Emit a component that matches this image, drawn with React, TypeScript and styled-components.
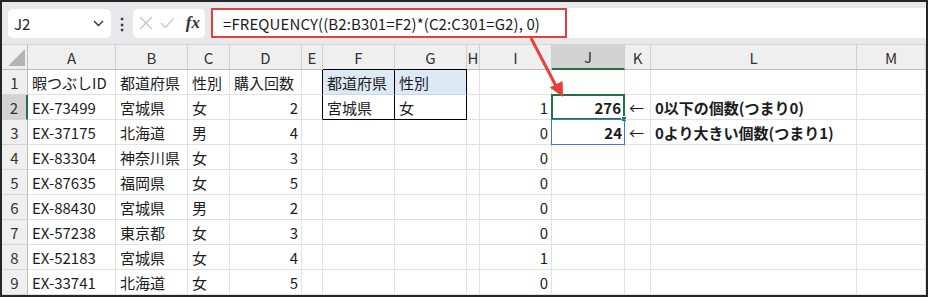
import React from "react";
import styled, { createGlobalStyle, css } from "styled-components";

const GlobalStyle = createGlobalStyle`
  html, body {
    margin: 0;
    padding: 0;
    background: #ffffff;
  }
  * {
    box-sizing: border-box;
  }
`;

const FONT = `"Noto Sans CJK JP", "Noto Sans", sans-serif`;

// column widths, row header first
const COLS = [26, 88, 72, 42, 72, 21, 72, 72, 13, 72, 73, 26, 206, 69];
const LETTERS = ["A", "B", "C", "D", "E", "F", "G", "H", "I", "J", "K", "L", "M"];

const Frame = styled.div`
  position: relative;
  width: 928px;
  height: 297px;
  border: 2px solid #262626;
  overflow: hidden;
  display: flex;
  flex-direction: column;
  font-family: ${FONT};
  color: #1c1c1c;
`;

const FormulaBar = styled.div`
  height: 43px;
  flex: none;
  display: flex;
  align-items: center;
  padding: 0 0 0 6px;
  background: #e8e8eb;
  border-bottom: 1px solid #d6d6d9;
`;

const NameBox = styled.div`
  width: 103px;
  height: 29px;
  background: #fff;
  border-radius: 5px;
  display: flex;
  align-items: center;
  justify-content: space-between;
  padding: 0 7px 0 6px;
  font-size: 15px;
  color: #222;
`;

const Dots = styled.div`
  width: 22px;
  display: flex;
  justify-content: center;
  font-size: 16px;
  color: #333;
  font-weight: bold;
`;

const ActionBox = styled.div`
  width: 72px;
  height: 29px;
  background: #fff;
  border-radius: 5px;
  display: flex;
  align-items: center;
  padding: 0 5px 0 6px;
  gap: 7px;
`;

const Fx = styled.span`
  font-family: "Liberation Serif", serif;
  font-style: italic;
  font-weight: bold;
  font-size: 17px;
  color: #333;
  margin-left: 4px;
`;

const FormulaField = styled.div`
  flex: 1;
  height: 30px;
  margin-left: 6px;
  background: #fff;
  display: flex;
  align-items: center;
`;

const FormulaText = styled.div`
  width: 356px;
  height: 30px;
  border: 2px solid #e2403d;
  display: flex;
  align-items: center;
  padding-left: 10px;
  font-size: 15px;
  letter-spacing: 0.1px;
  color: #1c1c1c;
  white-space: nowrap;
`;

const Sheet = styled.div`
  display: grid;
  grid-template-columns: ${COLS.map((c) => c + "px").join(" ")};
  grid-auto-rows: 25px;
`;

const ColHead = styled.div<{ $active?: boolean }>`
  background: ${(p) => (p.$active ? "#d3d3d3" : "#efefef")};
  border-right: 1px solid #d0d0d0;
  border-bottom: ${(p) => (p.$active ? "2px solid #217346" : "1px solid #bdbdbd")};
  display: flex;
  align-items: center;
  justify-content: center;
  font-size: 15px;
  color: #333;
`;

const Corner = styled.div`
  background: #efefef;
  border-right: 1px solid #bdbdbd;
  border-bottom: 1px solid #bdbdbd;
  display: flex;
  align-items: flex-end;
  justify-content: flex-end;
  padding: 0 2px 3px 0;
`;

const RowHead = styled.div<{ $active?: boolean }>`
  background: ${(p) => (p.$active ? "#d3d3d3" : "#efefef")};
  border-right: ${(p) => (p.$active ? "2px solid #217346" : "1px solid #bdbdbd")};
  border-bottom: 1px solid #d6d6d6;
  display: flex;
  align-items: center;
  justify-content: center;
  font-size: 15px;
  color: #333;
`;

type CellKind = "tableHead" | "tableBody" | "beforeTable" | "selected" | "range";

const Cell = styled.div<{ $num?: boolean; $bold?: boolean; $kind?: CellKind }>`
  position: relative;
  border-right: 1px solid #e1e1e1;
  border-bottom: 1px solid #e1e1e1;
  display: flex;
  align-items: center;
  justify-content: ${(p) => (p.$num ? "flex-end" : "flex-start")};
  padding: 0 3px 0 4px;
  font-size: 15px;
  font-weight: ${(p) => (p.$bold ? 700 : 400)};
  white-space: nowrap;

  ${(p) =>
    p.$kind === "beforeTable" &&
    css`
      border-right: 1px solid #000;
    `}
  ${(p) =>
    p.$kind === "tableHead" &&
    css`
      background: #dde9f5;
      border-right: 1px solid #000;
      border-top: 1px solid #000;
      margin-top: -1px;
      border-bottom: 1px solid #c9d6e3;
    `}
  ${(p) =>
    p.$kind === "tableBody" &&
    css`
      border-right: 1px solid #000;
      border-bottom: 1px solid #000;
    `}
  ${(p) =>
    p.$kind === "selected" &&
    css`
      border: 2px solid #217346;
      margin: -1px 0 0 -1px;
      padding-right: 2px;
    `}
  ${(p) =>
    p.$kind === "range" &&
    css`
      border: 1px solid #3b78d8;
      margin: -1px 0 0 -1px;
      padding-right: 2px;
    `}
`;

const Handle = styled.span`
  position: absolute;
  right: -4px;
  bottom: -4px;
  width: 6px;
  height: 6px;
  background: #217346;
  border: 1px solid #fff;
`;

const Overlay = styled.svg`
  position: absolute;
  top: -2px;
  left: -2px;
  pointer-events: none;
`;

type Row = {
  a?: string;
  b?: string;
  c?: string;
  d?: string;
  f?: string;
  g?: string;
  i?: string;
  j?: string;
  k?: string;
  l?: string;
};

const rows: Row[] = [
  { a: "暇つぶしID", b: "都道府県", c: "性別", d: "購入回数", f: "都道府県", g: "性別" },
  { a: "EX-73499", b: "宮城県", c: "女", d: "2", f: "宮城県", g: "女", i: "1", j: "276", k: "←", l: "0以下の個数(つまり0)" },
  { a: "EX-37175", b: "北海道", c: "男", d: "4", i: "0", j: "24", k: "←", l: "0より大きい個数(つまり1)" },
  { a: "EX-83304", b: "神奈川県", c: "女", d: "3", i: "0" },
  { a: "EX-87635", b: "福岡県", c: "女", d: "5", i: "0" },
  { a: "EX-88430", b: "宮城県", c: "男", d: "2", i: "0" },
  { a: "EX-57238", b: "東京都", c: "女", d: "3", i: "0" },
  { a: "EX-52183", b: "宮城県", c: "女", d: "4", i: "1" },
  { a: "EX-33741", b: "北海道", c: "女", d: "5", i: "0" },
];

function Chevron() {
  return (
    <svg width="11" height="7" viewBox="0 0 11 7">
      <path d="M1 1l4.5 4.5L10 1" fill="none" stroke="#333" strokeWidth="1.4" />
    </svg>
  );
}

function CrossIcon() {
  return (
    <svg width="14" height="14" viewBox="0 0 14 14">
      <path d="M1 1l12 12M13 1L1 13" stroke="#c4c4c4" strokeWidth="1.2" fill="none" />
    </svg>
  );
}

function CheckIcon() {
  return (
    <svg width="15" height="12" viewBox="0 0 15 12">
      <path d="M1 6l4.5 4.5L14 1" stroke="#c4c4c4" strokeWidth="1.2" fill="none" />
    </svg>
  );
}

function App() {
  return (
    <>
      <GlobalStyle />
      <Frame>
        <FormulaBar>
          <NameBox>
            <span>J2</span>
            <Chevron />
          </NameBox>
          <Dots>⋮</Dots>
          <ActionBox>
            <CrossIcon />
            <CheckIcon />
            <Fx>fx</Fx>
          </ActionBox>
          <FormulaField>
            <FormulaText>=FREQUENCY((B2:B301=F2)*(C2:C301=G2), 0)</FormulaText>
          </FormulaField>
        </FormulaBar>

        <Sheet>
          <Corner>
            <svg width="17" height="17" viewBox="0 0 17 17">
              <path d="M17 0V17H0Z" fill="#b4b4b4" />
            </svg>
          </Corner>
          {LETTERS.map((l) => (
            <ColHead key={l} $active={l === "J"}>
              {l}
            </ColHead>
          ))}

          {rows.map((r, idx) => {
            const n = idx + 1;
            const isHead = n === 1;
            const inTable = n <= 2;
            const fKind: CellKind | undefined = inTable ? (isHead ? "tableHead" : "tableBody") : undefined;
            return (
              <React.Fragment key={n}>
                <RowHead $active={n === 2}>{n}</RowHead>
                <Cell>{r.a}</Cell>
                <Cell>{r.b}</Cell>
                <Cell>{r.c}</Cell>
                <Cell $num={!isHead}>{r.d}</Cell>
                <Cell $kind={inTable ? "beforeTable" : undefined} />
                <Cell $kind={fKind}>{r.f}</Cell>
                <Cell $kind={fKind}>{r.g}</Cell>
                <Cell />
                <Cell $num>{r.i}</Cell>
                <Cell $num $bold $kind={n === 2 ? "selected" : n === 3 ? "range" : undefined}>
                  {r.j}
                  {n === 2 && <Handle />}
                </Cell>
                <Cell>{r.k}</Cell>
                <Cell $bold>{r.l}</Cell>
                <Cell />
              </React.Fragment>
            );
          })}
        </Sheet>

        <Overlay width="928" height="297" viewBox="0 0 928 297">
          <line x1="531" y1="38" x2="556" y2="86" stroke="#e5403c" strokeWidth="3" />
          <path d="M563 97L549.8 87.6L562.6 80.9Z" fill="#e5403c" />
        </Overlay>
      </Frame>
    </>
  );
}

export default App;
